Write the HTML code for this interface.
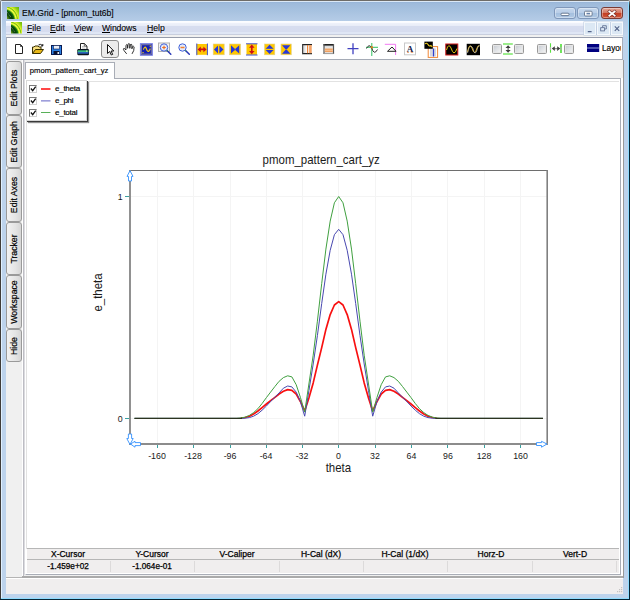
<!DOCTYPE html>
<html><head><meta charset="utf-8"><title>EM.Grid - [pmom_tut6b]</title>
<style>
*{box-sizing:border-box;margin:0;padding:0}
html,body{width:630px;height:600px;overflow:hidden}
body{position:relative;background:#cfcfcf;font-family:"Liberation Sans",sans-serif;font-size:11px;color:#000}
.abs{position:absolute}
#frame{left:0;top:0;width:630px;height:600px;background:#bdd3ec;border-radius:2.5px 2.5px 0 0;overflow:hidden}
#titlegrad{left:0;top:0;width:630px;height:36px;background:linear-gradient(#6e6c68 0,#6e6c68 1px,#dbe8f6 1px,#dbe8f6 2px,#94b2d6 2px,#9ebadb 3px,#a6c1df 10px,#b4cbe6 20px,#c1d5ec 36px)}
#edgeL{left:0;top:0;width:1px;height:600px;background:linear-gradient(#7c7a78 0,#5a5856 60px,#403c38 200px)}
#edgeL2{left:1px;top:2px;width:1px;height:597px;background:#e0f0ff}
#edgeR{left:629px;top:0;width:1px;height:600px;background:linear-gradient(#8a8a88 0,#1a2a34 6px,#052535 60px)}
#edgeR2{left:628px;top:2px;width:1px;height:597px;background:#8fdcff}
#edgeB{left:0;top:599px;width:630px;height:1px;background:#052535}
#edgeB2{left:1px;top:598px;width:628px;height:1px;background:#8fdcff}
#title{left:21.5px;top:7px;font-size:9.3px;line-height:12px;white-space:nowrap;-webkit-text-stroke:0.1px #000;transform:scaleX(0.925);transform-origin:0 0}
#menubar{left:6px;top:21px;width:617px;height:14px;background:linear-gradient(#fdfeff 0,#fafbff 1.500px,#eef1fa 2.500px,#e9edf8 4.500px,#d7ddef 5.500px,#d6dcef 10.500px,#dfe6f5 11.500px,#dfe6f5 13px,#c8cede 13px)}
#menusep{left:6px;top:35px;width:617px;height:2px;background:#f0f0f0}
.menu u{text-decoration-thickness:0.7px;text-underline-offset:1px}
.menu{top:22px;font-size:9.3px;line-height:12px;white-space:nowrap;-webkit-text-stroke:0.1px #000;transform:scaleX(0.93);transform-origin:0 0}
#toolbar{left:6px;top:37px;width:617px;height:23px;background:#fff;border:1px solid #8e97a6;border-color:#969cab #a8aebb #a5abb6 #a9b0bd}
#client{left:6px;top:60px;width:617px;height:534px;background:#f0f0f0}
.wb{top:7px;height:12px;border:1px solid #7f97ba;border-radius:3px;background:linear-gradient(#c6d8ed 0,#b9cee8 45%,#a4bfde 50%,#b0c9e5 100%);box-shadow:inset 0 0 0 1px rgba(255,255,255,.35)}
.mb{top:22px;height:13px;border:1px solid #f4f8fc;background:#dce8f4;box-shadow:0 0 0 0.5px #b9c9dd}
.vtab{left:6px;width:16px;border:1px solid #9a9a9a;border-radius:3px;background:linear-gradient(90deg,#f2f2f2,#e4e4e4 60%,#d6d6d6)}
.vtab span{position:absolute;left:50%;top:50%;white-space:nowrap;font-size:9.7px;line-height:12px;transform:translate(-50%,-50%) rotate(-90deg) scaleX(0.9);-webkit-text-stroke:0.2px #000}
.hd{top:549px;height:10px;font-size:8.5px;line-height:10px;text-align:center;width:84px;-webkit-text-stroke:0.25px #000;white-space:nowrap}
.vl{top:561px;height:12px;font-size:8.2px;line-height:12px;text-align:center;width:84px;-webkit-text-stroke:0.25px #000;white-space:nowrap}
.cb{width:8px;height:8px;border:1px solid #909090;border-color:#7a7a7a #d0d0d0 #d0d0d0 #7a7a7a;background:#fff}
.lg{left:55px;font-size:8px;line-height:10px;white-space:nowrap;letter-spacing:-0.25px;-webkit-text-stroke:0.15px #000}
.dcb{top:44px;width:10px;height:10px;border:1px solid #999;border-radius:1.5px;background:linear-gradient(135deg,#c2c6ce 0,#dcdfe3 45%,#f6f6f6 100%);box-shadow:inset 0 0 0 1px #e6e6e6}
</style></head><body>
<div id="frame" class="abs">
<div id="titlegrad" class="abs"></div>
<div id="edgeL" class="abs"></div><div id="edgeL2" class="abs"></div>
<div id="edgeR" class="abs"></div><div id="edgeR2" class="abs"></div>
<div id="edgeB2" class="abs"></div><div id="edgeB" class="abs"></div>
<!-- app icon -->
<svg class="abs" style="left:7px;top:7px" width="12" height="12" viewBox="0 0 12 12"><defs><radialGradient id="lg1" gradientUnits="userSpaceOnUse" cx="-3" cy="13" r="20"><stop offset="0" stop-color="#90a828"/><stop offset="0.220" stop-color="#5a8414"/><stop offset="0.290" stop-color="#14520c"/><stop offset="0.420" stop-color="#043c04"/><stop offset="0.510" stop-color="#147410"/><stop offset="0.555" stop-color="#a0d820"/><stop offset="0.600" stop-color="#ffff48"/><stop offset="0.640" stop-color="#b8e020"/><stop offset="0.670" stop-color="#70c010"/><stop offset="0.710" stop-color="#e0f030"/><stop offset="0.760" stop-color="#c0e420"/><stop offset="0.850" stop-color="#88cc10"/><stop offset="1" stop-color="#60a810"/></radialGradient></defs><rect width="12" height="12" fill="url(#lg1)"/><path d="M0.200,5.300 L4.200,10.400" stroke="#e8ecd0" stroke-width="0.700" stroke-dasharray="0.800 0.900" opacity="0.800"/></svg>
<div id="title" class="abs">EM.Grid - [pmom_tut6b]</div>
<!-- window buttons -->
<div class="abs wb" style="left:554px;width:22px"></div>
<div class="abs wb" style="left:577px;width:22px"></div>
<div class="abs wb" style="left:601px;width:22px;border-color:#7a3a34;background:linear-gradient(#e3a99b 0,#d47a66 45%,#c23c22 50%,#d2583c 100%)"></div>
<svg class="abs" style="left:550px;top:5px" width="76" height="16" viewBox="550 5 76 16">
<rect x="561" y="13.200" width="8" height="2.400" rx="1" fill="#fff" stroke="#5f708a" stroke-width="0.900"/>
<rect x="584.500" y="11.200" width="7.600" height="4.800" rx="1" fill="#fff" stroke="#5f708a" stroke-width="0.900"/><rect x="586.500" y="12.800" width="3.600" height="1.600" fill="#6480a8"/>
<path d="M609.300,11.500 L614.700,15.700 M614.700,11.500 L609.300,15.700" stroke="#7a3028" stroke-width="3" stroke-linecap="square"/>
<path d="M609.300,11.500 L614.700,15.700 M614.700,11.500 L609.300,15.700" stroke="#fff" stroke-width="1.700" stroke-linecap="square"/>
</svg>
<div id="menubar" class="abs"></div><div id="menusep" class="abs"></div>
<svg class="abs" style="left:10.700px;top:22px" width="11.500" height="11.500" viewBox="0 0 12 12"><rect width="12" height="12" fill="url(#lg1)"/><path d="M0.200,5.300 L4.200,10.400" stroke="#e8ecd0" stroke-width="0.700" stroke-dasharray="0.800 0.900" opacity="0.800"/></svg>
<div class="abs menu" style="left:27.3px"><u>F</u>ile</div>
<div class="abs menu" style="left:49.7px"><u>E</u>dit</div>
<div class="abs menu" style="left:74px"><u>V</u>iew</div>
<div class="abs menu" style="left:102px;letter-spacing:-0.1px"><u>W</u>indows</div>
<div class="abs menu" style="left:147px"><u>H</u>elp</div>
<!-- MDI buttons -->
<div class="abs mb" style="left:584px;width:12px"></div>
<div class="abs mb" style="left:597px;width:13px"></div>
<div class="abs mb" style="left:611px;width:12px"></div>
<svg class="abs" style="left:584px;top:22px" width="40" height="13" viewBox="584 22 40 13" fill="none" stroke="#54648a">
<path d="M587.800,31.600 H591.600" stroke-width="1.200"/>
<rect x="600.700" y="27.700" width="3.800" height="3.200" stroke-width="0.800"/><path d="M602.600,27.300 V25.700 H606.300 V29 H605" stroke-width="0.800"/>
<path d="M614.800,26.400 L619.200,30.800 M619.200,26.400 L614.800,30.800" stroke-width="1.150"/>
</svg>
<div id="toolbar" class="abs"></div>
<svg class="abs" style="left:7px;top:37px" width="615" height="22" viewBox="7 37 615 22">
<!-- new -->
<path d="M15.500,44.500 H20.500 L22.500,46.500 V53.500 H15.500 Z" fill="#fff" stroke="#222" stroke-width="1"/><path d="M20.500,44.500 V46.500 H22.500" fill="none" stroke="#222" stroke-width="0.800"/>
<!-- open -->
<path d="M32.500,53.500 V47 H34 L35,46 H38 L39,47 H41 V49" fill="#f8e080" stroke="#3a3000" stroke-width="1"/>
<path d="M32.500,53.500 L35.500,49.500 H43.500 L40.500,53.500 Z" fill="#e8b818" stroke="#3a3000" stroke-width="1"/>
<path d="M38.500,45 Q40.500,43.500 42.500,45.500 M42.800,44 V46 H41" fill="none" stroke="#111" stroke-width="1"/>
<!-- save -->
<rect x="51.500" y="45.500" width="10" height="9" fill="#2a80e4" stroke="#0a1a50" stroke-width="1"/>
<rect x="53.500" y="45.500" width="6" height="3.500" fill="#e8eef8" stroke="#0a1a50" stroke-width="0.600"/>
<rect x="53.500" y="51" width="6" height="3.500" fill="#0a1030"/><rect x="57.500" y="52" width="1.500" height="2" fill="#e8eef8"/>
<!-- print -->
<path d="M80.500,49.500 V43.500 H84.300 L87,46.200 V49.500" fill="#fff" stroke="#222" stroke-width="1"/><path d="M84.300,43.500 V46.200 H87" fill="none" stroke="#222" stroke-width="0.700"/>
<path d="M82,46.500 H84 M82,48 H85.500" stroke="#999" stroke-width="0.600"/>
<rect x="77.300" y="49" width="11.700" height="6.200" rx="1.200" fill="#0c1420"/>
<rect x="77.800" y="50.300" width="10.700" height="1.700" fill="#34bc84"/><rect x="77.800" y="52" width="10.700" height="1.700" fill="#2c64bc"/>
<rect x="86" y="50.600" width="1.500" height="1" fill="#f0f0a0"/>
<!-- select (pressed) -->
<rect x="101.500" y="40.500" width="17" height="17" rx="2.500" fill="#ececec" stroke="#8c8c8c"/>
<path d="M107.500,44.500 V53.500 L109.700,51.500 L111.300,55 L112.700,54.400 L111.100,51 H113.800 Z" fill="#fff" stroke="#111" stroke-width="1" stroke-linejoin="miter"/>
<!-- hand -->
<path d="M126.700,53.900 L124.200,50.800 Q122.800,49 123.700,48.500 Q124.600,48.100 125.900,50 L126,45.200 Q126.800,43.900 127.600,45.200 V48.300 L128,44.200 Q128.900,42.900 129.800,44.200 V48.300 L130.300,44.700 Q131.100,43.600 131.900,44.800 V48.800 L132.600,46.600 Q133.400,45.700 134.100,46.900 L133.700,50.600 L132,53.900" fill="#fff" stroke="#1a1a1a" stroke-width="0.900" stroke-linejoin="round"/>
<!-- blue sine box -->
<rect x="140.400" y="43.600" width="12" height="11.700" fill="#1420b0" stroke="#8088e8" stroke-width="1"/>
<rect x="141.600" y="44.800" width="9.600" height="9.300" fill="none" stroke="#a8a098" stroke-width="0.700"/>
<path d="M143.400,49.600 Q144.800,45.500 146.200,48.300 Q147.600,52.600 149,51 Q149.800,50 150.200,48.600" fill="none" stroke="#f0c818" stroke-width="1.200"/>
<path d="M142.300,52.600 H143.800 M149.600,46.300 H151" stroke="#f0c818" stroke-width="0.900"/>
<!-- zoom in -->
<rect x="158.500" y="43" width="11" height="8.500" fill="#f4f4f4" stroke="#b0b0b0" stroke-width="1"/>
<path d="M167,50.500 L170.800,54.300" stroke="#2838b8" stroke-width="1.500" stroke-linecap="round"/><path d="M166,49.800 L167.500,51" stroke="#30a030" stroke-width="1.200"/>
<circle cx="164" cy="47.500" r="3.700" fill="#e4ebfb" stroke="#4060d8" stroke-width="1"/>
<path d="M162.200,47.500 H165.800 M164,45.700 V49.300" stroke="#f07020" stroke-width="1.200"/>
<!-- zoom out -->
<path d="M185.500,50.500 L189.300,54.300" stroke="#2838b8" stroke-width="1.500" stroke-linecap="round"/><path d="M184.600,49.800 L186,51" stroke="#30a030" stroke-width="1.200"/>
<circle cx="182.500" cy="47.500" r="3.700" fill="#e4ebfb" stroke="#4060d8" stroke-width="1"/>
<path d="M180.500,47.500 H184.500" stroke="#f08030" stroke-width="1.500"/>
<!-- H fit -->
<rect x="196.500" y="44" width="11" height="10.800" fill="#ffc800"/><path d="M196.800,43.500 V55.200 M207.400,43.500 V55.200" stroke="#4050d0" stroke-width="1"/>
<path d="M199,49.400 H205" stroke="#d01010" stroke-width="1.600"/><path d="M197.600,49.400 L200.800,46.600 V52.200 Z M206.600,49.400 L203.400,46.600 V52.200 Z" fill="#d01010"/>
<!-- H expand -->
<rect x="213.200" y="44" width="11" height="10.800" fill="#ffc800" stroke="#e0d090" stroke-width="0.600"/>
<path d="M214,49.400 L218,45.400 V53.400 Z M223.400,49.400 L219.400,45.400 V53.400 Z" fill="#2838d8"/>
<!-- H shrink -->
<rect x="229.600" y="44" width="11" height="10.800" fill="#ffc800" stroke="#e0d090" stroke-width="0.600"/>
<path d="M235.600,49.400 L231,45.200 V53.600 Z M234.600,49.400 L239.200,45.200 V53.600 Z" fill="#2838d8"/>
<!-- V fit -->
<rect x="246.500" y="43.800" width="10.500" height="11" fill="#ffc800"/><path d="M246,43.800 H257.500 M246,55 H257.500" stroke="#4050d0" stroke-width="1"/>
<path d="M251.800,46 V53" stroke="#d01010" stroke-width="1.600"/><path d="M251.800,44.600 L249,47.800 H254.600 Z M251.800,54.200 L249,51 H254.600 Z" fill="#d01010"/>
<!-- V expand -->
<rect x="264.500" y="44" width="10.300" height="10.800" fill="#ffc800" stroke="#e0d090" stroke-width="0.600"/>
<path d="M269.600,44.800 L265.600,48.800 H273.600 Z M269.600,54 L265.600,50 H273.600 Z" fill="#2838d8"/>
<!-- V shrink -->
<rect x="281" y="44" width="10.300" height="10.800" fill="#ffc800" stroke="#e0d090" stroke-width="0.600"/>
<path d="M286.200,50 L282,45.200 H290.400 Z M286.200,49 L282,53.800 H290.400 Z" fill="#2838d8"/>
<!-- V cursors -->
<defs><linearGradient id="gv" x1="0" x2="1" y1="0" y2="0"><stop offset="0" stop-color="#c8c8c8"/><stop offset="0.500" stop-color="#fff"/><stop offset="1" stop-color="#e8e8e8"/></linearGradient>
<linearGradient id="gh" x1="0" x2="0" y1="0" y2="1"><stop offset="0" stop-color="#d0d0d0"/><stop offset="0.500" stop-color="#f4f4f4"/><stop offset="1" stop-color="#e0e0e0"/></linearGradient></defs>
<rect x="302.500" y="44.500" width="9" height="9" fill="url(#gv)"/><path d="M302,44.600 H312 M302,53.600 H312" stroke="#222" stroke-width="1.200"/><path d="M302.600,44 V54" stroke="#444" stroke-width="1.200"/>
<path d="M307.600,45 V53.200" stroke="#f08030" stroke-width="1.100"/><path d="M310.400,45 V53.200" stroke="#f4a468" stroke-width="2.600"/>
<!-- H cursors -->
<rect x="324" y="45" width="9.500" height="8.500" fill="url(#gh)"/><path d="M323.500,44.800 H334" stroke="#222" stroke-width="1.600"/><path d="M324,44 V54 M333.500,44 V54" stroke="#555" stroke-width="1.200"/><path d="M324,53.600 H333.500" stroke="#999" stroke-width="1"/>
<rect x="324.800" y="48.500" width="8" height="3.600" fill="#f0a060"/><path d="M324.800,50.300 H332.800" stroke="#f8d0a8" stroke-width="0.800"/>
<!-- crosshair -->
<path d="M347.500,48.700 H358.500 M353,43.200 V54.200" stroke="#4040c0" stroke-width="1.300"/>
<!-- tracker -->
<path d="M371.800,43 V56 M366,47.300 H378" stroke="#30c060" stroke-width="1"/>
<path d="M366.500,48.500 Q369,43.500 371.500,47.500 Q374,56 377.500,49.500" fill="none" stroke="#333" stroke-width="1"/>
<rect x="370.800" y="46.300" width="2" height="2" fill="#f07010"/>
<!-- peak -->
<path d="M384.800,44.300 H395.600 V55" fill="none" stroke="#f278f2" stroke-width="1"/>
<path d="M387.500,51.300 L392,47 L396,51.300 Z" fill="#fff" stroke="#222" stroke-width="1"/>
<!-- A -->
<rect x="404.500" y="43" width="11" height="11.800" fill="#fff" stroke="#c8c8c8" stroke-width="1"/>
<text x="410" y="52.400" font-family="Liberation Serif, serif" font-weight="bold" font-size="9" text-anchor="middle" fill="#101848">A</text>
<path d="M407,52.300 H409 M410.800,52.300 H413.200" stroke="#e07020" stroke-width="0.700"/>
<!-- overlay -->
<rect x="428.200" y="46.600" width="9.400" height="10.800" fill="#fff" stroke="#f08838" stroke-width="1"/><rect x="430" y="48.500" width="6" height="8" fill="#d8d8e0"/><path d="M433.500,48.500 V56.500" stroke="#3040d0" stroke-width="1.200"/>
<rect x="424.400" y="41.600" width="8.400" height="7.200" fill="#000"/><path d="M425,44 Q426.500,42.200 428,44.500 Q429.500,47 431,45.500 L432.200,47" fill="none" stroke="#f0d020" stroke-width="1.100"/>
<!-- scope red -->
<rect x="445.800" y="44" width="12" height="11" fill="#000" stroke="#d01818" stroke-width="1"/>
<path d="M446.500,50 Q448.500,42.500 451,48 Q454,57.500 457,48.500" fill="none" stroke="#e0c010" stroke-width="1"/>
<!-- scope two -->
<rect x="466.700" y="43.800" width="13.300" height="11.400" fill="#000"/>
<path d="M467.500,52 Q469.500,42 472,48 Q474.500,57 477,48 Q478,45 479.500,46" fill="none" stroke="#d8a810" stroke-width="1"/>
<path d="M467.500,53 Q469,45.500 471,46 Q473,47 474,52 Q476,55 477.500,48 Q478.500,45 479.800,45" fill="none" stroke="#c8c8c8" stroke-width="0.700"/>
<!-- V caliper glyph -->
<path d="M503,43.900 H512.800 M503,53.900 H512.800" stroke="#7ce868" stroke-width="1.500"/>
<path d="M508.100,47 V51" stroke="#444" stroke-width="1"/><path d="M508.100,45.200 L505.500,48.100 H510.700 Z M508.100,52.700 L505.500,49.900 H510.700 Z" fill="#3c3c3c"/>
<!-- H caliper glyph -->
<path d="M550.500,43.200 V52.800" stroke="#58e040" stroke-width="1.100"/><path d="M561,44 V53" stroke="#58e040" stroke-width="1.700"/><path d="M550.500,47 V50 M561,47 V50" stroke="#b0b0b0" stroke-width="1.200"/>
<path d="M554,48.600 H558" stroke="#8a8a8a" stroke-width="1.200"/><path d="M551.800,48.600 L554.800,46.200 V51 Z M560.200,48.600 L557.200,46.200 V51 Z" fill="#3c3c3c"/>
<!-- layout -->
<rect x="587" y="44" width="12.200" height="8" fill="#000080"/><path d="M587,48 H599.200" stroke="#a8b8e8" stroke-width="0.900"/>
</svg>
<div class="abs dcb" style="left:492px"></div>
<div class="abs dcb" style="left:514px"></div>
<div class="abs dcb" style="left:537px"></div>
<div class="abs dcb" style="left:564px"></div>
<div class="abs" style="left:602px;top:43px;width:19px;height:12px;overflow:hidden;font-size:8.25px;line-height:12px;white-space:nowrap;-webkit-text-stroke:0.15px #000">Layout</div>

<div id="client" class="abs"></div>
<!-- left vertical tabs -->
<div class="abs vtab" style="top:61px;height:54px"><span>Edit Plots</span></div>
<div class="abs vtab" style="top:115px;height:53px"><span>Edit Graph</span></div>
<div class="abs vtab" style="top:168px;height:54px"><span>Edit Axes</span></div>
<div class="abs vtab" style="top:222px;height:53px"><span>Tracker</span></div>
<div class="abs vtab" style="top:275px;height:54px"><span>Workspace</span></div>
<div class="abs vtab" style="top:329px;height:33px"><span>Hide</span></div>
<!-- bottom separator + status bar -->
<div class="abs" style="left:6px;top:577px;width:617px;height:1px;background:#b4b4b4"></div>
<div class="abs" style="left:22px;top:576px;width:601px;height:2px;background:#aaaaaa"></div>
<div class="abs" style="left:6px;top:578px;width:617px;height:1px;background:#fff"></div>
<div class="abs" style="left:6px;top:579px;width:617px;height:15px;background:#f0eeee"></div>
<svg class="abs" style="left:614px;top:584px" width="10" height="10" viewBox="0 0 10 10" fill="#c4c2c2"><rect x="7" y="7" width="1.200" height="1.200"/><rect x="7" y="5" width="1.200" height="1.200"/><rect x="5" y="7" width="1.200" height="1.200"/><rect x="7" y="3" width="1.200" height="1.200"/><rect x="5" y="5" width="1.200" height="1.200"/><rect x="3" y="7" width="1.200" height="1.200"/></svg>
<!-- MDI child panel -->
<div class="abs" style="left:22px;top:60px;width:1px;height:516px;background:#fff"></div>
<div class="abs" style="left:23px;top:60px;width:600px;height:516px;background:#f0f0f0;border-left:1px solid #bdbdc4"></div>
<div class="abs" style="left:24px;top:60px;width:1px;height:515px;background:#dcdce0"></div>
<div class="abs" style="left:25px;top:78px;width:596px;height:497px;background:#fff;border:1px solid #a9adb6;border-left-color:#fff"></div>
<div class="abs" style="left:621px;top:78px;width:2px;height:498px;background:#fff"></div>
<div class="abs" style="left:623px;top:60px;width:1px;height:518px;background:#9a9a9a"></div>
<div class="abs" style="left:26px;top:81px;width:593px;height:468px;background:#fff;border:1px solid #e2e2e2;border-bottom:none;border-right:none"></div>
<!-- doc tab -->
<div class="abs" style="left:25px;top:62px;width:90px;height:17px;background:#fff;border:1px solid #a9adb6;border-bottom:none"></div>
<div class="abs" style="left:29.800px;top:65.500px;font-size:7.700px;line-height:10px;white-space:nowrap;-webkit-text-stroke:0.150px #000">pmom_pattern_cart_yz</div>
<!-- legend -->
<div class="abs" style="left:26px;top:80px;width:61px;height:41px;background:#fff;border:1px solid #d8d8d8;box-shadow:1px 1px 0 #3a3a3a,2px 2px 1px #909090"></div>
<div class="abs cb" style="left:29.200px;top:84.600px"></div>
<div class="abs cb" style="left:29.200px;top:96.600px"></div>
<div class="abs cb" style="left:29.200px;top:108.600px"></div>
<svg class="abs" style="left:26px;top:81px" width="62" height="41" viewBox="26 81 62 41" fill="none">
<path d="M30.900,88.500 L32.700,90.600 L35.700,86.600 M30.900,100.500 L32.700,102.600 L35.700,98.600 M30.900,112.500 L32.700,114.600 L35.700,110.600" stroke="#111" stroke-width="1.300"/>
<path d="M41,89 H50.500" stroke="#ff0808" stroke-width="1.400"/>
<path d="M41,100.900 H50.500" stroke="#5050c0" stroke-width="0.900"/>
<path d="M41,112.500 H50.500" stroke="#58b058" stroke-width="1"/>
</svg>
<div class="abs lg" style="top:84px">e_theta</div>
<div class="abs lg" style="top:96px">e_phi</div>
<div class="abs lg" style="top:108px">e_total</div>
<!-- bottom table -->
<div class="abs" style="left:27px;top:548px;width:592px;height:25px;background:#f0eeee;border-top:1px solid #b6b6b6"></div>
<div class="abs" style="left:27px;top:559px;width:592px;height:1px;background:#b6b6b6"></div>
<div class="abs" style="left:110px;top:561px;width:1px;height:11px;background:#dcdada"></div>
<div class="abs" style="left:194px;top:561px;width:1px;height:11px;background:#dcdada"></div>
<div class="abs" style="left:279px;top:561px;width:1px;height:11px;background:#dcdada"></div>
<div class="abs" style="left:363px;top:561px;width:1px;height:11px;background:#dcdada"></div>
<div class="abs" style="left:447px;top:561px;width:1px;height:11px;background:#dcdada"></div>
<div class="abs" style="left:532px;top:561px;width:1px;height:11px;background:#dcdada"></div>
<div class="abs" style="left:616px;top:561px;width:1px;height:11px;background:#dcdada"></div>
<div class="abs hd" style="left:26px">X-Cursor</div>
<div class="abs hd" style="left:110px">Y-Cursor</div>
<div class="abs hd" style="left:195px">V-Caliper</div>
<div class="abs hd" style="left:279px">H-Cal (dX)</div>
<div class="abs hd" style="left:363px">H-Cal (1/dX)</div>
<div class="abs hd" style="left:449px">Horz-D</div>
<div class="abs hd" style="left:533px">Vert-D</div>
<div class="abs vl" style="left:26px">-1.459e+02</div>
<div class="abs vl" style="left:110px">-1.064e-01</div>

<svg class="abs" style="left:0;top:0" width="630" height="600" viewBox="0 0 630 600">
<g font-family="Liberation Sans, sans-serif" fill="#1a1a1a">
<g stroke="#f4f4f4" stroke-width="1" fill="none">
<path d="M157.500,171 V443 M193.500,171 V443 M230.500,171 V443 M266.500,171 V443 M302.500,171 V443 M338.500,171 V443 M375.500,171 V443 M411.500,171 V443 M447.500,171 V443 M484.500,171 V443 M520.500,171 V443 M131,196.500 H547 M131,418.500 H547"/>
</g>
<path d="M130,170.500 H548" stroke="#6e6e6e" stroke-width="1" fill="none"/>
<path d="M547.200,170 V445" stroke="#808080" stroke-width="1.600" fill="none"/>
<path d="M130,170 V445 M129,444 H548" stroke="#8c8c8c" stroke-width="1.900" fill="none"/>
<g stroke="#3aa0a0" stroke-width="1" fill="none">
<path d="M125,196.500 H129 M125,418.500 H129"/>
<path d="M157.500,445 V448 M193.500,445 V448 M230.500,445 V448 M266.500,445 V448 M302.500,445 V448 M338.500,445 V448 M375.500,445 V448 M411.500,445 V448 M447.500,445 V448 M484.500,445 V448 M520.500,445 V448"/>
</g>
<g font-size="9.800" text-anchor="middle">
<text transform="translate(157.0,458.900) scale(0.900,1)">-160</text><text transform="translate(193.0,458.900) scale(0.900,1)">-128</text><text transform="translate(230.0,458.900) scale(0.900,1)">-96</text><text transform="translate(266.0,458.900) scale(0.900,1)">-64</text><text transform="translate(302.0,458.900) scale(0.900,1)">-32</text><text transform="translate(338.5,458.900) scale(0.900,1)">0</text><text transform="translate(375.0,458.900) scale(0.900,1)">32</text><text transform="translate(411.5,458.900) scale(0.900,1)">64</text><text transform="translate(448.0,458.900) scale(0.900,1)">96</text><text transform="translate(484.0,458.900) scale(0.900,1)">128</text><text transform="translate(520.5,458.900) scale(0.900,1)">160</text>
</g>
<g font-size="9.800" text-anchor="end"><text transform="translate(122.600,200) scale(0.900,1)">1</text><text transform="translate(122.600,422) scale(0.900,1)">0</text></g>
<text transform="translate(321.200,163.700) scale(0.940,1)" font-size="12.200" text-anchor="middle">pmom_pattern_cart_yz</text>
<text transform="translate(338.400,471.800) scale(0.940,1)" font-size="12.200" text-anchor="middle">theta</text>
<text transform="translate(102.300,292.500) rotate(-90) scale(0.940,1)" font-size="12.200" text-anchor="middle">e_theta</text>
<g fill="#fff" stroke="#3492ff" stroke-width="0.900">
<path d="M130,170.700 L133,176.400 H131.500 V181 H128.500 V176.400 H127 Z"/>
<path d="M130,444.500 L133.200,438.500 H131.600 V434 H128.400 V438.500 H126.800 Z"/>
<path d="M130.500,444 L135,441.300 V442.600 H140.500 V445.600 H135 V447.200 Z"/>
<path d="M547,444 L541.500,441.300 V442.600 H536.500 V445.500 H541.500 V447.200 Z"/>
</g>
</g>

<g fill="none" stroke-linejoin="round">
<path d="M240.9,418.2 L245.1,417.5 L249.4,416.2 L253.6,414.0 L257.9,411.0 L262.1,407.6 L266.4,404.0 L270.6,400.6 L274.9,397.3 L279.1,394.0 L283.4,391.3 L287.7,389.6 L291.9,390.4 L296.2,394.0 L300.4,401.5 L304.7,411.0 L308.9,398.0 L313.2,382.9 L317.4,365.1 L321.7,347.6 L325.9,329.4 L330.2,314.6 L334.4,305.0 L338.7,301.7 L343.0,305.0 L347.2,314.6 L351.5,329.4 L355.7,347.6 L360.0,365.1 L364.2,382.9 L368.5,398.0 L372.7,411.0 L377.0,401.5 L381.2,394.0 L385.5,390.4 L389.7,389.6 L394.0,391.3 L398.3,394.0 L402.5,397.3 L406.8,400.6 L411.0,404.0 L415.3,407.6 L419.5,411.0 L423.8,414.0 L428.0,416.2 L432.3,417.5 L436.5,418.2" stroke="#f81010" stroke-width="1.700"/>
<path d="M134.5,418.4 L138.8,418.4 L143.0,418.4 L147.3,418.4 L151.5,418.4 L155.8,418.4 L160.0,418.4 L164.3,418.4 L168.5,418.4 L172.8,418.4 L177.1,418.4 L181.3,418.4 L185.6,418.4 L189.8,418.4 L194.1,418.4 L198.3,418.4 L202.6,418.4 L206.8,418.4 L211.1,418.4 L215.3,418.4 L219.6,418.4 L223.8,418.4 L228.1,418.4 L232.4,418.4 L236.6,418.4 L240.9,418.4 L245.1,418.2 L249.4,417.6 L253.6,416.2 L257.9,413.7 L262.1,410.2 L266.4,406.0 L270.6,401.5 L274.9,397.3 L279.1,392.9 L283.4,388.2 L287.7,386.0 L291.9,386.9 L296.2,392.1 L300.4,401.5 L304.7,416.2 L308.9,390.7 L313.2,364.0 L317.4,335.6 L321.7,303.6 L325.9,274.2 L330.2,250.3 L334.4,234.7 L338.7,229.3 L343.0,234.7 L347.2,250.3 L351.5,274.2 L355.7,303.6 L360.0,335.6 L364.2,364.0 L368.5,390.7 L372.7,416.2 L377.0,401.5 L381.2,392.1 L385.5,386.9 L389.7,386.0 L394.0,388.2 L398.3,392.9 L402.5,397.3 L406.8,401.5 L411.0,406.0 L415.3,410.2 L419.5,413.7 L423.8,416.2 L428.0,417.6 L432.3,418.2 L436.5,418.4 L440.8,418.4 L445.0,418.4 L449.3,418.4 L453.6,418.4 L457.8,418.4 L462.1,418.4 L466.3,418.4 L470.6,418.4 L474.8,418.4 L479.1,418.4 L483.3,418.4 L487.6,418.4 L491.8,418.4 L496.1,418.4 L500.3,418.4 L504.6,418.4 L508.9,418.4 L513.1,418.4 L517.4,418.4 L521.6,418.4 L525.9,418.4 L530.1,418.4 L534.4,418.4 L538.6,418.4 L542.9,418.4" stroke="#4848b0" stroke-width="1"/>
<path d="M134.5,418.4 L138.8,418.4 L143.0,418.4 L147.3,418.4 L151.5,418.4 L155.8,418.4 L160.0,418.4 L164.3,418.4 L168.5,418.4 L172.8,418.4 L177.1,418.4 L181.3,418.4 L185.6,418.4 L189.8,418.4 L194.1,418.4 L198.3,418.4 L202.6,418.4 L206.8,418.4 L211.1,418.4 L215.3,418.4 L219.6,418.4 L223.8,418.4 L228.1,418.4 L232.4,418.4 L236.6,418.4 L240.9,418.0 L245.1,417.1 L249.4,415.4 L253.6,412.6 L257.9,408.7 L262.1,403.5 L266.4,397.6 L270.6,392.1 L274.9,386.5 L279.1,381.3 L283.4,377.6 L287.7,375.8 L291.9,376.9 L296.2,384.7 L300.4,397.3 L304.7,412.1 L308.9,384.0 L313.2,355.2 L317.4,321.2 L321.7,283.7 L325.9,249.1 L330.2,221.1 L334.4,202.8 L338.7,196.5 L343.0,202.8 L347.2,221.1 L351.5,249.1 L355.7,283.7 L360.0,321.2 L364.2,355.2 L368.5,384.0 L372.7,412.1 L377.0,397.3 L381.2,384.7 L385.5,376.9 L389.7,375.8 L394.0,377.6 L398.3,381.3 L402.5,386.5 L406.8,392.1 L411.0,397.6 L415.3,403.5 L419.5,408.7 L423.8,412.6 L428.0,415.4 L432.3,417.1 L436.5,418.0 L440.8,418.4 L445.0,418.4 L449.3,418.4 L453.6,418.4 L457.8,418.4 L462.1,418.4 L466.3,418.4 L470.6,418.4 L474.8,418.4 L479.1,418.4 L483.3,418.4 L487.6,418.4 L491.8,418.4 L496.1,418.4 L500.3,418.4 L504.6,418.4 L508.9,418.4 L513.1,418.4 L517.4,418.4 L521.6,418.4 L525.9,418.4 L530.1,418.4 L534.4,418.4 L538.6,418.4 L542.9,418.4" stroke="#40a040" stroke-width="1"/>
<path d="M134.500,418.400 H242 M435.400,418.400 H543" stroke="#2c3420" stroke-width="1.300"/>
</g>
</svg>
</div>
</body></html>
